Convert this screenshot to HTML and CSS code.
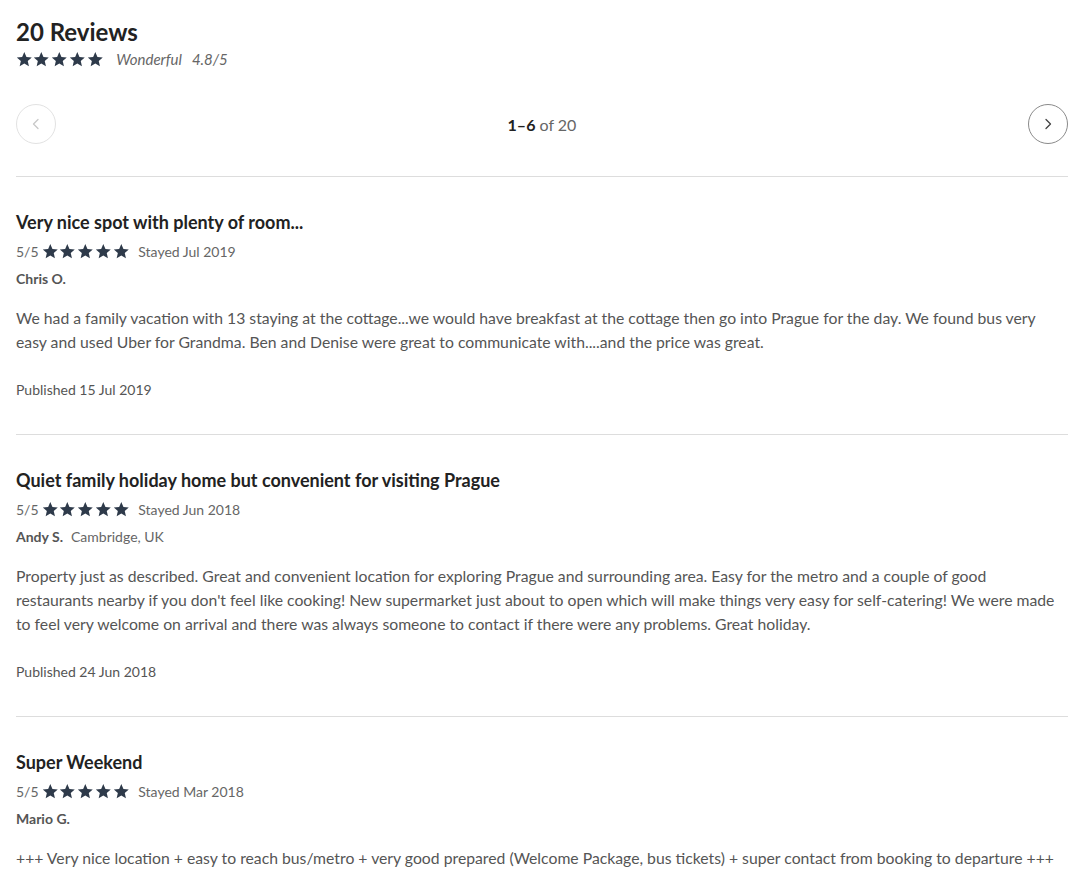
FILE: index.html
```html
<!DOCTYPE html>
<html lang="en">
<head>
<meta charset="utf-8">
<title>Reviews</title>
<link rel="stylesheet" href="styles.css">
</head>
<body>
<svg width="0" height="0" class="defs" aria-hidden="true">
  <defs>
    <symbol id="star" viewBox="0 0 24 24">
      <path d="M12 1.6l3.1 7.1 7.7.7-5.8 5.1 1.7 7.6L12 18.1l-6.7 4 1.7-7.6L1.2 9.4l7.7-.7z"/>
    </symbol>
  </defs>
</svg>
<main class="reviews">
  <header class="summary">
    <h1 class="summary-title">20 Reviews</h1>
    <div class="summary-rating">
      <span class="stars stars-lg">
        <svg><use href="#star"/></svg><svg><use href="#star"/></svg><svg><use href="#star"/></svg><svg><use href="#star"/></svg><svg><use href="#star"/></svg>
      </span>
      <span class="summary-label">Wonderful</span>
      <span class="summary-score">4.8/5</span>
    </div>
  </header>

  <nav class="pager">
    <button class="pager-btn pager-btn-disabled" aria-label="Previous">
      <svg viewBox="0 0 16 16"><path d="M10 3.5L5.5 8l4.5 4.5"/></svg>
    </button>
    <div class="pager-count"><strong>1–6</strong> of 20</div>
    <button class="pager-btn" aria-label="Next">
      <svg viewBox="0 0 16 16"><path d="M6 3.5L10.5 8 6 12.5"/></svg>
    </button>
  </nav>

  <article class="review">
    <h2 class="review-title">Very nice spot with plenty of room...</h2>
    <div class="review-rating">
      <span class="review-score">5/5</span>
      <span class="stars">
        <svg><use href="#star"/></svg><svg><use href="#star"/></svg><svg><use href="#star"/></svg><svg><use href="#star"/></svg><svg><use href="#star"/></svg>
      </span>
      <span class="review-stayed">Stayed Jul 2019</span>
    </div>
    <div class="review-author"><strong>Chris O.</strong></div>
    <p class="review-body">We had a family vacation with 13 staying at the cottage...we would have breakfast at the cottage then go into Prague for the day. We found bus very easy and used Uber for Grandma. Ben and Denise were great to communicate with....and the price was great.</p>
    <div class="review-published">Published 15 Jul 2019</div>
  </article>

  <article class="review">
    <h2 class="review-title">Quiet family holiday home but convenient for visiting Prague</h2>
    <div class="review-rating">
      <span class="review-score">5/5</span>
      <span class="stars">
        <svg><use href="#star"/></svg><svg><use href="#star"/></svg><svg><use href="#star"/></svg><svg><use href="#star"/></svg><svg><use href="#star"/></svg>
      </span>
      <span class="review-stayed">Stayed Jun 2018</span>
    </div>
    <div class="review-author"><strong>Andy S.</strong><span class="review-location">Cambridge, UK</span></div>
    <p class="review-body">Property just as described. Great and convenient location for exploring Prague and surrounding area. Easy for the metro and a couple of good restaurants nearby if you don't feel like cooking! New supermarket just about to open which will make things very easy for self-catering! We were made to feel very welcome on arrival and there was always someone to contact if there were any problems. Great holiday.</p>
    <div class="review-published">Published 24 Jun 2018</div>
  </article>

  <article class="review">
    <h2 class="review-title">Super Weekend</h2>
    <div class="review-rating">
      <span class="review-score">5/5</span>
      <span class="stars">
        <svg><use href="#star"/></svg><svg><use href="#star"/></svg><svg><use href="#star"/></svg><svg><use href="#star"/></svg><svg><use href="#star"/></svg>
      </span>
      <span class="review-stayed">Stayed Mar 2018</span>
    </div>
    <div class="review-author"><strong>Mario G.</strong></div>
    <p class="review-body">+++ Very nice location + easy to reach bus/metro + very good prepared (Welcome Package, bus tickets) + super contact from booking to departure +++</p>
    <div class="review-published">Published 12 Mar 2018</div>
  </article>
</main>
</body>
</html>
```

FILE: styles.css
```css
* { box-sizing: border-box; }

html, body {
  margin: 0;
  padding: 0;
  background: #fff;
}

body {
  font-family: Lato, "Open Sans", "Liberation Sans", sans-serif;
  color: #555;
}

.defs {
  position: absolute;
  width: 0;
  height: 0;
  overflow: hidden;
}

.reviews {
  width: 1052px;
  margin-left: 16px;
  padding-top: 17px;
}

.summary-title {
  margin: 0;
  font-size: 24px;
  line-height: 30px;
  font-weight: 700;
  color: #222;
}

.summary-rating {
  display: flex;
  align-items: center;
  height: 20px;
  margin-top: 2px;
  font-size: 15px;
  font-style: italic;
  color: #666;
}

.summary-label { margin-left: 13px; }
.summary-score { margin-left: 10px; }

.stars {
  display: inline-flex;
  align-items: center;
  gap: 1.2px;
  fill: #2e3a4a;
}

.stars svg {
  width: 16.6px;
  height: 16.6px;
  display: block;
}

.stars-lg { margin-left: -0.5px; }

.pager {
  display: flex;
  align-items: center;
  justify-content: space-between;
  margin-top: 35px;
  padding-bottom: 32px;
  border-bottom: 1px solid #ddd;
}

.pager-btn {
  width: 40px;
  height: 40px;
  border-radius: 50%;
  border: 1px solid #8a8a8a;
  background: #fff;
  padding: 0;
  display: flex;
  align-items: center;
  justify-content: center;
  cursor: pointer;
}

.pager-btn svg {
  width: 16px;
  height: 16px;
  fill: none;
  stroke: #444;
  stroke-width: 1.3;
  stroke-linecap: round;
  stroke-linejoin: round;
}

.pager-btn-disabled { border-color: #e2e2e2; }
.pager-btn-disabled svg { stroke: #c8c8c8; }

.pager-count {
  font-size: 16px;
  color: #666;
}

.pager-count strong {
  color: #222;
  font-weight: 700;
}

.review {
  padding: 33px 0 34px;
  border-bottom: 1px solid #ddd;
}

.review-title {
  margin: 0;
  font-size: 18px;
  line-height: 24px;
  font-weight: 700;
  color: #222;
}

.review-rating {
  display: flex;
  align-items: center;
  height: 20px;
  margin-top: 7px;
  font-size: 14px;
  color: #666;
}

.review-score { margin-right: 3px; }
.review-stayed { margin-left: 9px; }

.review-author {
  display: flex;
  align-items: center;
  height: 20px;
  margin-top: 7px;
  font-size: 14px;
  color: #555;
}

.review-author strong { font-weight: 700; }

.review-location {
  margin-left: 8px;
  color: #666;
}

.review-body {
  margin: 18px 0 0;
  padding-right: 3px;
  font-size: 15.75px;
  line-height: 24px;
  color: #555;
}

.review-published {
  margin-top: 26px;
  font-size: 14px;
  line-height: 20px;
  color: #555;
}
```
